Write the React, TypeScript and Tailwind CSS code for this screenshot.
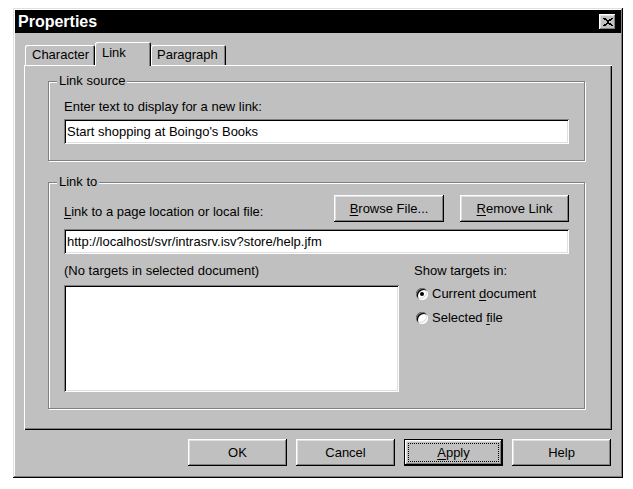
import React from "react";

const raised =
  "shadow-[inset_-1px_-1px_#000,inset_1px_1px_#fff,inset_-2px_-2px_#808080,inset_2px_2px_#dfdfdf]";
const sunken =
  "shadow-[inset_1px_1px_#808080,inset_-1px_-1px_#fff,inset_2px_2px_#000,inset_-2px_-2px_#dfdfdf]";

function CloseGlyph() {
  const rows: [number, number][][] = [
    [[0, 2], [6, 2]],
    [[1, 2], [5, 2]],
    [[2, 4]],
    [[3, 2]],
    [[2, 4]],
    [[1, 2], [5, 2]],
    [[0, 2], [6, 2]],
  ];
  return (
    <svg width="10" height="8" viewBox="0 0 8 7" preserveAspectRatio="none" shapeRendering="crispEdges">
      {rows.map((r, y) =>
        r.map(([x, w], i) => <rect key={`${y}-${i}`} x={x} y={y} width={w} height={1} fill="#000" />)
      )}
    </svg>
  );
}

function Btn({ children, w }: { children: React.ReactNode; w: string }) {
  return (
    <div className={`${w} h-[27px] bg-[#c0c0c0] ${raised} flex items-center justify-center`}>
      {children}
    </div>
  );
}

function Radio({ checked, children }: { checked?: boolean; children: React.ReactNode }) {
  return (
    <div className="flex items-center h-[16px]">
      <div
        className={`w-[12px] h-[12px] rounded-full bg-white ${sunken} flex items-center justify-center ml-[2px]`}
      >
        {checked && <div className="w-[4px] h-[4px] rounded-full bg-black" />}
      </div>
      <span className="ml-[4px] leading-[16px]">{children}</span>
    </div>
  );
}

function Group({
  label,
  h,
  children,
  mt,
}: {
  label: string;
  h: string;
  mt: string;
  children: React.ReactNode;
}) {
  return (
    <div
      className={`relative ${mt} ml-[24px] w-[537px] ${h} border border-[#808080] shadow-[inset_1px_1px_#fff,1px_1px_#fff] flex flex-col px-[15px]`}
    >
      <span className="absolute left-[8px] top-[-9px] px-[2px] bg-[#c0c0c0] leading-[16px]">{label}</span>
      {children}
    </div>
  );
}

export default function App() {
  return (
    <div
      className="w-[633px] h-[489px] bg-white pt-[8px] pl-[13px] text-[13px] text-black"
      style={{ fontFamily: '"Liberation Sans", Arial, sans-serif' }}
    >
      <div className="w-[610px] h-[470px] bg-[#c0c0c0] p-[2px] flex flex-col shadow-[inset_-1px_-1px_#000,inset_1px_1px_#dfdfdf,inset_-2px_-2px_#808080,inset_2px_2px_#fff]">
        {/* Title bar */}
        <div className="h-[23px] bg-black flex items-center justify-between pl-[3px] pr-[5px]">
          <span className="text-white font-bold text-[16px] leading-[20px]">Properties</span>
          <div className={`w-[17px] h-[16px] bg-[#c0c0c0] ${raised} flex items-center justify-center`}>
            <CloseGlyph />
          </div>
        </div>

        <div className="px-[9px] flex flex-col">
          {/* Tabs */}
          <div className="mt-[9px] h-[23px] flex items-end pl-[1px]">
            <div className="w-[70px] h-[20px] rounded-t-[2px] shadow-[inset_1px_1px_#fff,inset_-1px_0_#000,inset_-2px_0_#808080] pl-[7px] pt-[2px] leading-[16px]">
              Character
            </div>
            <div className="relative z-10 w-[56px] h-[24px] -mb-[1px] bg-[#c0c0c0] rounded-t-[2px] shadow-[inset_1px_1px_#fff,inset_-1px_0_#000,inset_-2px_0_#808080] pl-[7px] pt-[3px] leading-[16px]">
              Link
            </div>
            <div className="w-[75px] h-[20px] rounded-t-[2px] shadow-[inset_1px_1px_#fff,inset_-1px_0_#000,inset_-2px_0_#808080] pl-[6px] pt-[2px] leading-[16px]">
              Paragraph
            </div>
          </div>

          {/* Panel */}
          <div className="h-[365px] flex flex-col shadow-[inset_1px_1px_#fff,inset_-1px_-1px_#000,inset_-2px_-2px_#808080]">
            <Group label="Link source" h="h-[80px]" mt="mt-[16px]">
              <div className="mt-[17px] h-[16px] leading-[16px]">Enter text to display for a new link:</div>
              <div className={`mt-[4px] h-[25px] bg-white ${sunken} flex items-center px-[3px]`}>
                Start shopping at Boingo's Books
              </div>
            </Group>

            <Group label="Link to" h="h-[227px]" mt="mt-[21px]">
              <div className="mt-[12px] h-[27px] flex items-end">
                <span className="pb-[2px] leading-[16px]">
                  <span className="underline underline-offset-2">L</span>ink to a page location or local file:
                </span>
                <div className="ml-auto flex gap-[16px]">
                  <Btn w="w-[110px]">
                    <span>
                      <span className="underline underline-offset-2">B</span>rowse File...
                    </span>
                  </Btn>
                  <Btn w="w-[109px]">
                    <span>
                      <span className="underline underline-offset-2">R</span>emove Link
                    </span>
                  </Btn>
                </div>
              </div>
              <div className={`mt-[7px] h-[25px] bg-white ${sunken} flex items-center px-[3px]`}>
                http://localhost/svr/intrasrv.isv?store/help.jfm
              </div>
              <div className="flex mt-[9px]">
                <div className="flex flex-col w-[335px]">
                  <div className="h-[16px] leading-[16px]">(No targets in selected document)</div>
                  <div className={`mt-[6px] h-[107px] bg-white ${sunken}`} />
                </div>
                <div className="ml-[15px] flex flex-col">
                  <div className="h-[16px] leading-[16px]">Show targets in:</div>
                  <div className="mt-[7px]">
                    <Radio checked>
                      Current <span className="underline underline-offset-2">d</span>ocument
                    </Radio>
                  </div>
                  <div className="mt-[8px]">
                    <Radio>
                      Selected <span className="underline underline-offset-2">f</span>ile
                    </Radio>
                  </div>
                </div>
              </div>
            </Group>
          </div>

          {/* Bottom buttons */}
          <div className="mt-[9px] flex justify-end gap-[9px] pr-[1px]">
            <Btn w="w-[99px]">OK</Btn>
            <Btn w="w-[99px]">Cancel</Btn>
            <div className="w-[99px] h-[27px] border border-black bg-[#c0c0c0] shadow-[inset_-1px_-1px_#000,inset_1px_1px_#fff,inset_-2px_-2px_#808080,inset_2px_2px_#dfdfdf] p-[3px] flex">
              <div className="flex-1 border border-dotted border-black flex items-center justify-center">
                <span>
                  <span className="underline underline-offset-2">A</span>pply
                </span>
              </div>
            </div>
            <Btn w="w-[99px]">Help</Btn>
          </div>
        </div>
      </div>
    </div>
  );
}
